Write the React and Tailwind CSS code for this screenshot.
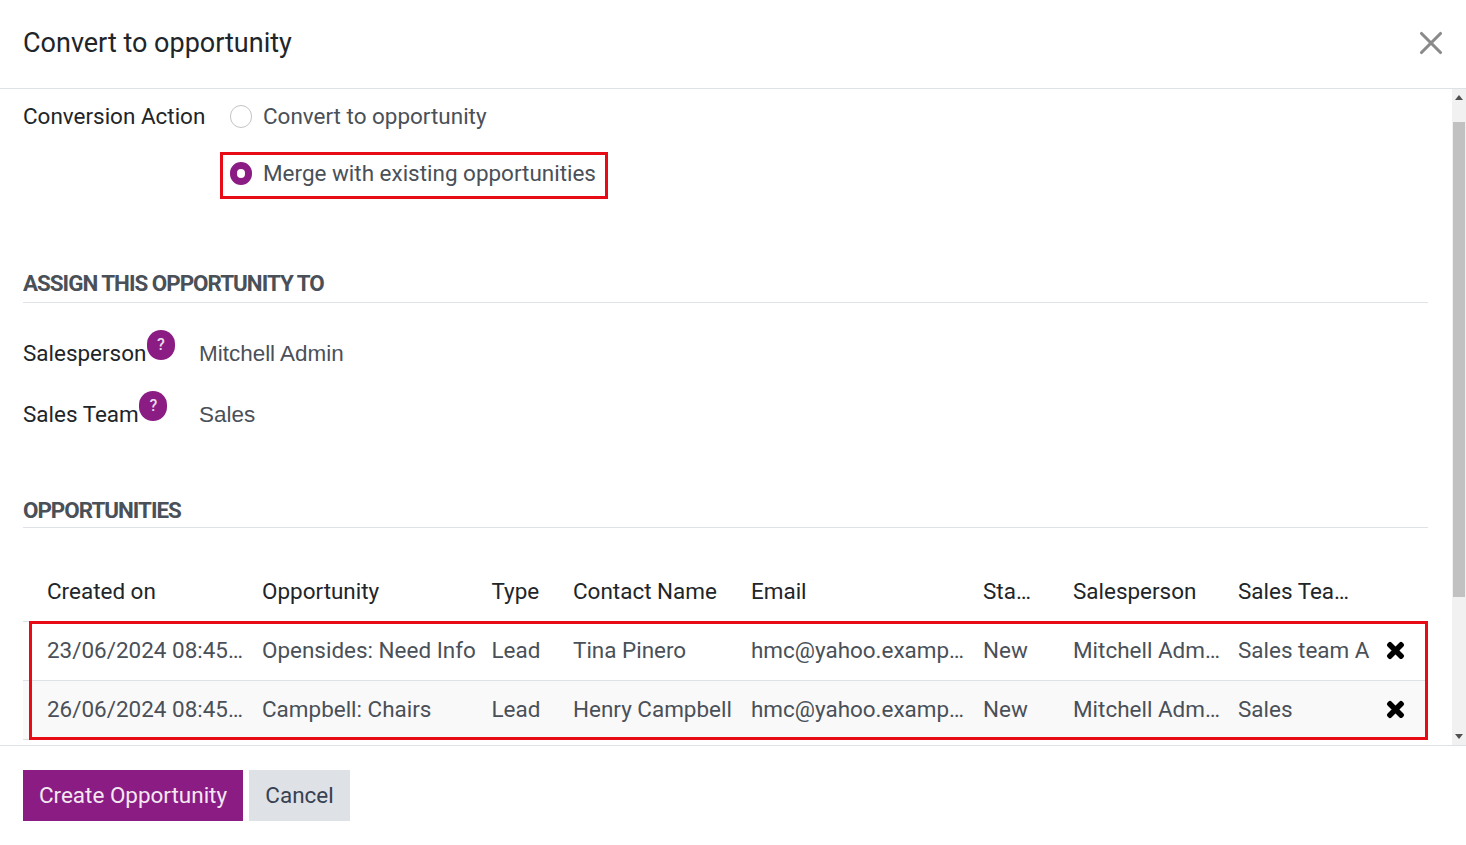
import { X } from "lucide-react";
import { FaTimes } from "react-icons/fa";

const columns = ["Created on", "Opportunity", "Type", "Contact Name", "Email", "Sta…", "Salesperson", "Sales Tea…"];

const rows = [
  ["23/06/2024 08:45…", "Opensides: Need Info", "Lead", "Tina Pinero", "hmc@yahoo.examp…", "New", "Mitchell Adm…", "Sales team A"],
  ["26/06/2024 08:45…", "Campbell: Chairs", "Lead", "Henry Campbell", "hmc@yahoo.examp…", "New", "Mitchell Adm…", "Sales"],
];

const gridCols = "grid grid-cols-[215px_229.5px_81.5px_178px_232px_90px_165px_149px_41px] pl-[24px] items-center";

const Help = () => (
  <span className="w-[28px] h-[30px] ml-[0.5px] mt-[-4px] rounded-full bg-[#8a1c83] text-[#eadcea] text-[16px] font-medium flex items-center justify-center self-start">?</span>
);

const Section = ({ title, className }) => (
  <div className={`border-b border-[#dee2e6] text-[22.4px] leading-[37px] font-bold tracking-[-1px] text-[#4a5058] ${className}`}>
    {title}
  </div>
);

const Radio = ({ checked, label }) => (
  <div className="flex items-center h-[34px] gap-[11px]">
    {checked ? (
      <span className="w-[22px] h-[23px] rounded-full border-[7px] border-[#8a1c83] bg-white"></span>
    ) : (
      <span className="w-[22px] h-[23px] rounded-full border border-[#c4c4c4] bg-white"></span>
    )}
    <span className="text-[#4a5058] pt-[1px]">{label}</span>
  </div>
);

const FieldValue = ({ children }) => (
  <span className="text-[#4a5058] font-['Liberation_Sans',sans-serif]">{children}</span>
);

export default function App() {
  return (
    <div className="w-[1466px] h-[845px] bg-white flex flex-col overflow-hidden text-[22.46px] text-[#212529] font-['Roboto',sans-serif]">
      <div className="h-[89px] shrink-0 border-b border-[#dee2e6] flex items-center justify-between pl-[23px] pr-[16px] pb-[1px]">
        <h1 className="text-[27px] text-[#212529]">Convert to opportunity</h1>
        <X size={38} strokeWidth={2} className="text-[#8a8a8a] mt-[-2px]" />
      </div>

      <div className="flex-1 flex min-h-0">
        <div className="flex-1 min-w-0 pl-[23px] pr-[24px] relative">
          <div className="flex pt-[10px]">
            <div className="w-[207px] h-[34px] leading-[35px]">Conversion Action</div>
            <div className="flex flex-col gap-[23px]">
              <Radio label="Convert to opportunity" />
              <Radio checked label="Merge with existing opportunities" />
            </div>
          </div>
          <div className="absolute left-[220px] top-[63px] w-[388px] h-[47px] border-[3px] border-[#e60b14]"></div>

          <Section title="ASSIGN THIS OPPORTUNITY TO" className="mt-[75px] h-[38px]" />

          <div className="flex items-center h-[61px] mt-[20px]">
            <div className="w-[176px] flex h-[40px] items-center">
              <span>Salesperson</span>
              <Help />
            </div>
            <FieldValue>Mitchell Admin</FieldValue>
          </div>
          <div className="flex items-center h-[61px]">
            <div className="w-[176px] flex h-[40px] items-center">
              <span>Sales Team</span>
              <Help />
            </div>
            <FieldValue>Sales</FieldValue>
          </div>

          <Section title="OPPORTUNITIES" className="mt-[47px] h-[36px]" />

          <div className={`${gridCols} h-[94px] pt-[34px] border-b border-[#dee2e6]`}>
            {columns.map((c) => (
              <div key={c}>{c}</div>
            ))}
          </div>
          {rows.map((row, i) => (
            <div
              key={row[0]}
              className={`${gridCols} h-[59px] border-b border-[#dee2e6] text-[#4a5058] ${i === 1 ? "bg-[#f9f9f9]" : ""}`}
            >
              {row.map((cell, j) => (
                <div key={j} className="whitespace-nowrap">{cell}</div>
              ))}
              <FaTimes size={23} stroke="currentColor" strokeWidth={28} className="text-black ml-[-3px] mt-[-1px]" />
            </div>
          ))}
          <div className="absolute left-[29px] top-[532px] w-[1399px] h-[119px] border-[3px] border-[#e60b14]"></div>
        </div>

        <div className="w-[14px] shrink-0 bg-[#f1f1f1] flex flex-col items-center">
          <div className="h-[33px] w-full flex justify-center pt-[6px]">
            <span className="w-0 h-0 border-l-[4px] border-r-[4px] border-b-[5px] border-l-transparent border-r-transparent border-b-[#505050]"></span>
          </div>
          <div className="w-[12px] h-[475px] bg-[#c1c1c1]"></div>
          <div className="flex-1 w-full flex justify-center items-end pb-[6px]">
            <span className="w-0 h-0 border-l-[4px] border-r-[4px] border-t-[5px] border-l-transparent border-r-transparent border-t-[#505050]"></span>
          </div>
        </div>
      </div>

      <div className="h-[100px] shrink-0 border-t border-[#dee2e6] flex items-start gap-[6px] pl-[23px] pt-[24px]">
        <button className="h-[51px] w-[220px] pt-[1px] bg-[#8a1c83] text-[#f3e8f2]">Create Opportunity</button>
        <button className="h-[51px] w-[101px] pt-[1px] bg-[#dee2e6] text-[#374151]">Cancel</button>
      </div>
    </div>
  );
}
